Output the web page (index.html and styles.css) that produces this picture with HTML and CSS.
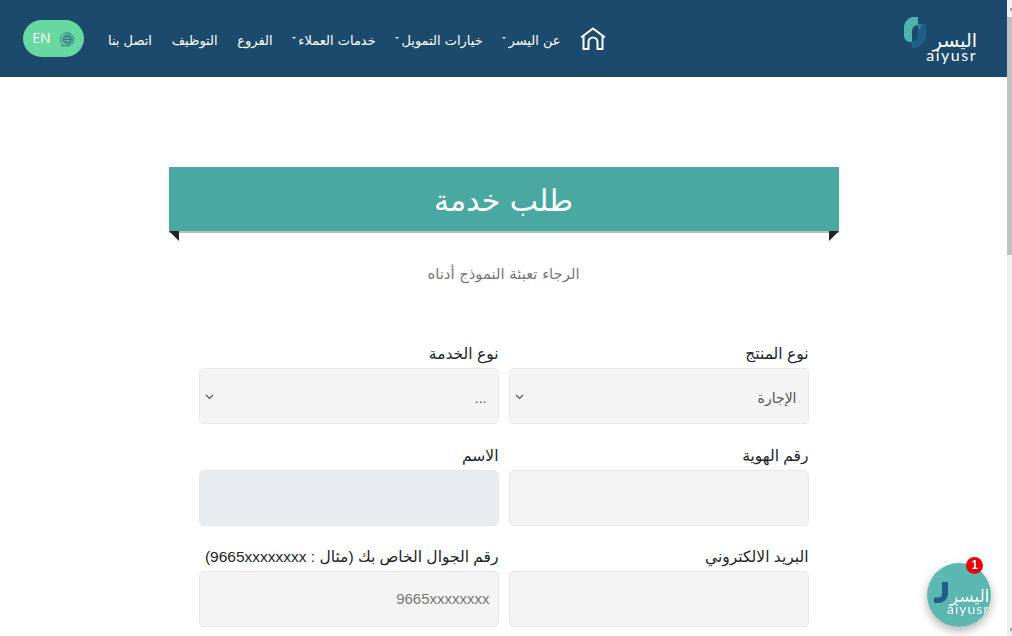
FILE: index.html
```html
<!DOCTYPE html>
<html lang="ar" dir="rtl">
<head>
    <meta charset="UTF-8">
    <meta name="viewport" content="width=device-width, initial-scale=1.0">
    <title>طلب خدمة</title>
    <link rel="stylesheet" href="styles.css">
</head>
<body>
    <header class="site-header">
        <a class="logo" href="#">
            <svg class="logo-mark" viewBox="0 0 22 31" width="22" height="31">
                <path fill="#4fb3ad" d="M14 0v8a6 6 0 0 0-6 6v11H6a6 6 0 0 1-6-6v-8A11 11 0 0 1 14 0z"/>
                <path fill="#1f5f86" d="M22 7v11a13 13 0 0 1-14 13v-7a6 6 0 0 0 6-6V7z"/>
                <path fill="#2f8a9b" d="M14 7h3v3l-3 3z"/>
            </svg>
            <span class="logo-text">
                <span class="logo-ar">اليسر</span>
                <span class="logo-en" dir="ltr">aiyusr</span>
            </span>
        </a>
        <nav class="main-nav">
            <a class="home-link" href="#" aria-label="الرئيسية">
                <svg viewBox="0 0 26 23" width="26" height="23" fill="none" stroke="#fff" stroke-width="2">
                    <path d="M1 10.5 13 1.500l12 9"/>
                    <path d="M3.500 9v13h5v-7a4.500 4.500 0 0 1 9 0v7h5V9"/>
                </svg>
            </a>
            <a class="nav-item has-caret" href="#">عن اليسر</a>
            <a class="nav-item has-caret" href="#">خيارات التمويل</a>
            <a class="nav-item has-caret" href="#">خدمات العملاء</a>
            <a class="nav-item" href="#">الفروع</a>
            <a class="nav-item" href="#">التوظيف</a>
            <a class="nav-item" href="#">اتصل بنا</a>
            <a class="lang-pill" href="#">
                <svg viewBox="0 0 16 16" width="15" height="15" fill="none" stroke="#2f6f85" stroke-width="1">
                    <path d="M3 13.200A7 7 0 1 1 6 14.700H1.500z"/>
                    <circle cx="8" cy="8" r="4.800"/>
                    <ellipse cx="8" cy="8" rx="2.200" ry="4.800"/>
                    <path d="M3.200 8h9.600M4 5.500h8M4 10.500h8"/>
                </svg>
                <span class="lang-label" dir="ltr">EN</span>
            </a>
        </nav>
    </header>

    <main class="page-content">
        <div class="form-banner">
            <h1>طلب خدمة</h1>
        </div>
        <p class="form-hint">الرجاء تعبئة النموذج أدناه</p>

        <form class="service-form">
            <div class="form-group">
                <label>نوع المنتج</label>
                <select class="form-control">
                    <option>الإجارة</option>
                </select>
            </div>
            <div class="form-group">
                <label>نوع الخدمة</label>
                <select class="form-control">
                    <option>...</option>
                </select>
            </div>
            <div class="form-group">
                <label>رقم الهوية</label>
                <input class="form-control" type="text">
            </div>
            <div class="form-group">
                <label>الاسم</label>
                <input class="form-control" type="text" disabled>
            </div>
            <div class="form-group">
                <label>البريد الالكتروني</label>
                <input class="form-control" type="text">
            </div>
            <div class="form-group">
                <label>رقم الجوال الخاص بك (مثال : 9665xxxxxxxx)</label>
                <input class="form-control" type="text" placeholder="9665xxxxxxxx">
            </div>
        </form>
    </main>

    <a class="chat-widget" href="#">
        <span class="chat-circle">
            <svg class="chat-mark" viewBox="0 0 14 21" width="14" height="21">
                <path fill="none" stroke="#fff" stroke-opacity="0.18" d="M-4 10V2a8 8 0 0 1 8-8h7"/>
                <path fill="#1f5f86" d="M8 0h6v12a9 9 0 0 1-9 9H0v-5.500h4a4 4 0 0 0 4-4z"/>
            </svg>
            <span class="chat-text">
                <span class="chat-ar">اليسر</span>
                <span class="chat-en" dir="ltr">aiyusr</span>
            </span>
        </span>
        <span class="chat-badge">1</span>
    </a>

    <div class="page-scrollbar">
        <div class="scrollbar-thumb"></div>
    </div>
</body>
</html>
```

FILE: styles.css
```css
body {
    margin: 0;
    padding-right: 5px;
    font-family: "Liberation Sans", "DejaVu Sans", sans-serif;
    background: #fff;
    color: #212529;
}

a {
    color: inherit;
    text-decoration: none;
}

.site-header {
    display: flex;
    justify-content: space-between;
    align-items: center;
    height: 77px;
    padding: 0 30px 0 23px;
    background: #1c4a6c;
    color: #fff;
}

.logo {
    display: flex;
    align-items: flex-start;
    direction: ltr;
    height: 47px;
}

.logo-mark {
    margin-top: 2px;
}

.logo-text {
    display: flex;
    flex-direction: column;
    align-items: flex-end;
    margin-top: 17px;
}

.logo-ar {
    font-family: "DejaVu Sans", sans-serif;
    font-size: 19px;
    line-height: 17px;
}

.logo-en {
    font-family: "Lato", sans-serif;
    font-size: 16px;
    line-height: 12px;
    letter-spacing: 1.500px;
}

.main-nav {
    display: flex;
    align-items: center;
    gap: 19.700px;
    font-family: "DejaVu Sans", sans-serif;
    font-size: 13px;
}

.home-link {
    display: flex;
}

.nav-item {
    display: flex;
    align-items: center;
    white-space: nowrap;
    margin-top: 4px;
}

.has-caret::after {
    content: "";
    width: 0;
    height: 0;
    margin-right: 2px;
    margin-bottom: 6px;
    border-top: 2px solid #fff;
    border-left: 2px solid transparent;
    border-right: 2px solid transparent;
}

.lang-pill {
    display: flex;
    align-items: center;
    justify-content: center;
    gap: 9px;
    width: 61px;
    height: 37px;
    margin-right: 4.300px;
    border-radius: 19px;
    background: #66d8a0;
    font-family: "Open Sans", sans-serif;
    font-size: 14px;
}

.lang-pill svg {
    margin-top: 1px;
}

.lang-label {
    margin-bottom: 3px;
}

.page-content {
    width: 670px;
    margin: 90px auto 0;
}

.form-banner {
    position: relative;
    height: 64px;
    background: #4aa8a3;
    border-bottom: 2px solid #b8bdbc;
    text-align: center;
}

.form-banner::before,
.form-banner::after {
    content: "";
    position: absolute;
    top: 64px;
    border-top: 10px solid #222;
}

.form-banner::before {
    left: 0;
    border-left: 10px solid transparent;
}

.form-banner::after {
    right: 0;
    border-right: 10px solid transparent;
}

.form-banner h1 {
    margin: 0;
    font-family: "DejaVu Sans", sans-serif;
    font-size: 30px;
    font-weight: 400;
    line-height: 68px;
    color: #fff;
}

.form-hint {
    margin: 31px 0 0;
    font-family: "DejaVu Sans", sans-serif;
    font-size: 14.800px;
    line-height: 20px;
    text-align: center;
    color: #777;
}

.service-form {
    display: grid;
    grid-template-columns: 300px 300px;
    gap: 19.600px 10px;
    padding: 0 30px;
    margin-top: 58px;
}

.form-group label {
    display: block;
    height: 26px;
    font-size: 15.500px;
    line-height: 23px;
    white-space: nowrap;
}

.form-control {
    display: block;
    box-sizing: border-box;
    width: 100%;
    height: 56px;
    padding: 0 8px;
    border: 1px solid #e8e8e8;
    border-radius: 5px;
    background: #f4f4f4;
    font-family: "Liberation Sans", "DejaVu Sans", sans-serif;
    font-size: 14px;
    color: #555;
}

.form-control:disabled {
    background: #e9ecef;
}

.form-control::placeholder {
    font-size: 15px;
    color: #777;
}

select.form-control {
    appearance: none;
    padding: 3px 11px 0 13px;
    background-image: url("data:image/svg+xml,%3Csvg xmlns='http://www.w3.org/2000/svg' viewBox='0 0 9 6'%3E%3Cpath fill='none' stroke='%23555' stroke-width='1.200' d='M1 1l3.500 3.500L8 1'/%3E%3C/svg%3E");
    background-repeat: no-repeat;
    background-position: left 5px top 25px;
    background-size: 9px 6px;
}

.chat-widget {
    position: fixed;
    right: 21px;
    bottom: 9px;
    width: 64px;
    height: 64px;
    border-radius: 50%;
    box-shadow: 0 4px 10px rgba(0, 0, 0, 0.3);
}

.chat-circle {
    display: block;
    position: relative;
    width: 64px;
    height: 64px;
    border-radius: 50%;
    overflow: hidden;
    background: #5ab7b2;
    color: #fff;
}

.chat-mark {
    position: absolute;
    left: 7px;
    top: 19px;
    overflow: visible;
}

.chat-text {
    position: absolute;
    left: 20px;
    top: 26px;
    width: 50px;
    display: flex;
    flex-direction: column;
    align-items: flex-start;
    direction: ltr;
}

.chat-ar {
    padding-left: 3px;
    font-family: "DejaVu Sans", sans-serif;
    font-size: 17px;
    line-height: 14px;
}

.chat-en {
    font-family: "Lato", sans-serif;
    font-size: 14px;
    line-height: 11px;
    letter-spacing: 1px;
}

.chat-badge {
    position: absolute;
    top: -6px;
    left: 39px;
    width: 17px;
    height: 17px;
    border-radius: 50%;
    background: #e8000b;
    color: #fff;
    font-family: "Liberation Sans", sans-serif;
    font-size: 12px;
    font-weight: 700;
    line-height: 17px;
    text-align: center;
}

/* scrollbars are not photographed, so the page draws its own */
.page-scrollbar {
    position: fixed;
    top: 0;
    right: 0;
    bottom: 0;
    width: 5px;
    background: #f1f1f1;
}

.page-scrollbar::before,
.page-scrollbar::after {
    content: "";
    position: absolute;
    right: 0;
    width: 2px;
    height: 3px;
    background: #a3a3a3;
}

.page-scrollbar::before {
    top: 8px;
}

.page-scrollbar::after {
    bottom: 5px;
}

.scrollbar-thumb {
    height: 238px;
    margin-top: 17px;
    background: #c1c1c1;
}
```
